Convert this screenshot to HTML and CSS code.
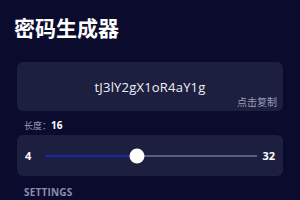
FILE: index.html
```html
<!DOCTYPE html>
<html lang="zh-CN">
<head>
    <meta charset="UTF-8">
    <meta name="viewport" content="width=device-width, initial-scale=1.0">
    <title>密码生成器</title>
    <link rel="stylesheet" href="styles.css">
</head>
<body>
    <div class="app">
        <h1 class="title">密码生成器</h1>

        <!-- Password output -->
        <div class="pw-card">
            <span class="pw-text">tJ3lY2gX1oR4aY1g</span>
            <span class="copy-hint">点击复制</span>
        </div>

        <!-- Length -->
        <div class="field-label">长度：<b>16</b></div>
        <div class="slider-card">
            <span class="slider-min">4</span>
            <div class="track">
                <div class="track-fill" style="width: 43%;"></div>
                <div class="thumb" style="left: 43%;"></div>
            </div>
            <span class="slider-max">32</span>
        </div>

        <!-- Settings -->
        <div class="section-title">SETTINGS</div>
        <div class="settings-card"></div>
    </div>
</body>
</html>
```

FILE: styles.css
```css
* {
    margin: 0;
    padding: 0;
    box-sizing: border-box;
}

html, body {
    width: 100%;
    height: 100%;
    background-color: #0b0c2d;
    font-family: 'Open Sans', 'Noto Sans CJK SC', sans-serif;
    color: #ffffff;
    overflow: hidden;
}

.app {
    padding: 13px 17px 0 17px;
}

.title {
    font-family: 'Noto Sans CJK SC', sans-serif;
    font-size: 21px;
    font-weight: 700;
    line-height: 28px;
    margin-left: -3px;
    margin-bottom: 21px;
}

/* Password output */
.pw-card {
    position: relative;
    height: 49px;
    background-color: #1d1f3f;
    border-radius: 6px;
    display: flex;
    align-items: center;
    justify-content: center;
}

.pw-text {
    font-size: 13px;
    color: #eef0f8;
    letter-spacing: 0.2px;
}

.copy-hint {
    position: absolute;
    right: 6px;
    bottom: 2px;
    font-family: 'Noto Sans CJK SC', sans-serif;
    font-size: 10px;
    color: #9c9eb8;
}

/* Length slider */
.field-label {
    font-family: 'Noto Sans CJK SC', sans-serif;
    font-size: 9px;
    color: #9c9eb8;
    padding-left: 7px;
    margin-top: 7px;
    line-height: 14px;
    margin-bottom: 2px;
}

.field-label b {
    color: #ffffff;
    font-family: 'Open Sans', sans-serif;
    font-size: 10px;
}

.slider-card {
    height: 41px;
    background-color: #1d1f3f;
    border-radius: 6px;
    display: flex;
    align-items: center;
    padding: 0 8px;
}

.slider-min,
.slider-max {
    font-size: 11px;
    font-weight: 700;
    color: #ffffff;
}

.slider-min {
    margin-right: 14px;
}

.slider-max {
    margin-left: 5px;
}

.track {
    position: relative;
    flex: 1;
    height: 2px;
    background-color: #5b5d7c;
}

.track-fill {
    height: 100%;
    background-color: #1c22b3;
}

.thumb {
    position: absolute;
    top: 50%;
    width: 15px;
    height: 15px;
    border-radius: 50%;
    background-color: #ffffff;
    transform: translate(-50%, -50%);
}

/* Settings */
.section-title {
    font-size: 10px;
    font-weight: 700;
    color: #8b8db0;
    letter-spacing: 0.2px;
    padding-left: 7px;
    margin-top: 9px;
    line-height: 14px;
}

.settings-card {
    height: 40px;
    margin-top: 3px;
    background-color: #1d1f3f;
    border-radius: 6px;
}
```
